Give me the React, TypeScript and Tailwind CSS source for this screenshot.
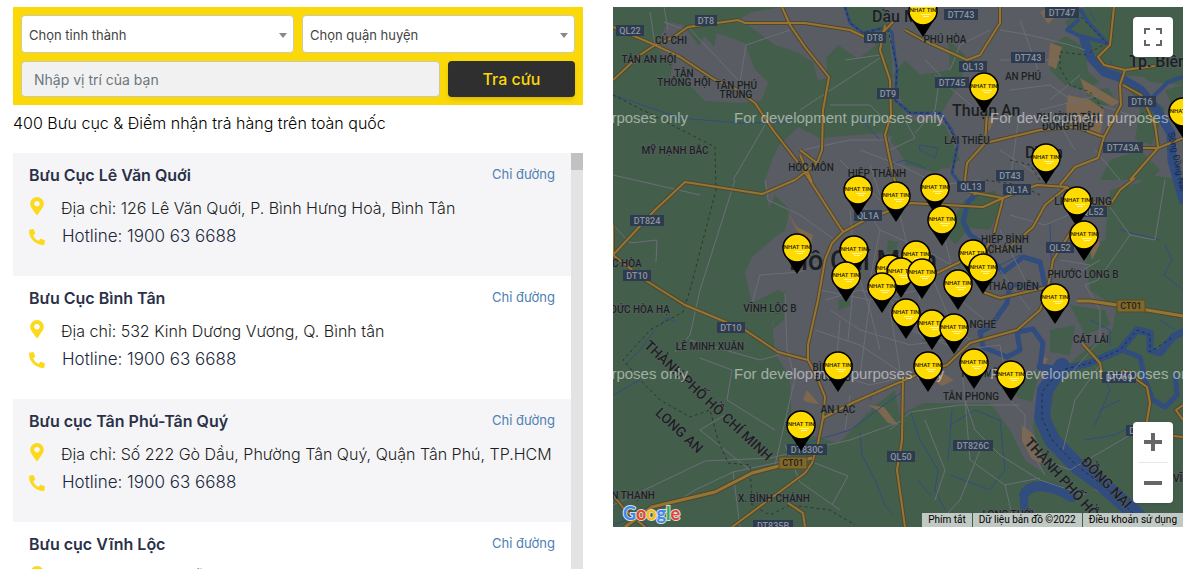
import { FaPhoneAlt, FaMapMarkerAlt } from 'react-icons/fa'

interface Office {
  name: string
  address: string
  hotline: string
}

interface MapLabel {
  text: string
  x: number
  y: number
}

const offices: Office[] = [
  { name: 'Bưu Cục Lê Văn Quới', address: '126 Lê Văn Quới, P. Bình Hưng Hoà, Bình Tân', hotline: '1900 63 6688' },
  { name: 'Bưu Cục Bình Tân', address: '532 Kinh Dương Vương, Q. Bình tân', hotline: '1900 63 6688' },
  { name: 'Bưu cục Tân Phú-Tân Quý', address: 'Số 222 Gò Dầu, Phường Tân Quý, Quận Tân Phú, TP.HCM', hotline: '1900 63 6688' },
  { name: 'Bưu cục Vĩnh Lộc', address: '280 Nguyễn Thị Tú, P. Bình Hưng Hoà B, Bình Tân', hotline: '1900 63 6688' },
]

// [x, y] of the centre of each pin's disc, back to front
const pins = [
  [923, 11], [984, 87], [1046, 158], [1183, 112], [935, 188], [858, 190], [896, 196],
  [1077, 201], [942, 220], [1084, 235], [797, 248], [854, 250], [973, 254], [916, 255],
  [983, 268], [890, 269], [901, 272], [922, 273], [846, 276], [958, 284], [882, 287],
  [1055, 298], [906, 313], [932, 324], [954, 328], [974, 363], [838, 366], [928, 366],
  [1011, 375], [801, 425],
]

const urban = [
  'M655 47L668 22L683 25L699 46L704 36L714 47L717 33L745 43L755 70L768 82L762 100L738 103L705 101L688 83L672 63Z',
  'M735 22L752 12L782 7H845L850 25L870 38L876 45L858 59L838 45L826 58L828 78L818 80L813 62L797 52L775 45L748 25Z',
  'M885 7H1085L1070 30L1090 50L1120 75L1183 80V180L1150 175L1115 200L1105 250L1118 300L1112 330L1085 350L1060 372L1040 395L1033 425L1042 472L1025 460L1010 430L990 403L923 403L890 420L868 412L852 430L838 443L792 430L790 378L775 353L772 323L785 293L778 290L752 303L745 273L752 257L772 240L768 200L765 180L772 160L778 147L798 127L820 138L883 133L900 140L905 165L935 172L960 160L945 125L910 120L893 95L892 60L888 30Z',
  'M673 63l5 2l-2 15l-6 -2Z',
]

const parks = [
  'M893 75L905 60L920 75L950 70L948 40L965 55L962 80L940 115L905 112Z',
  'M905 125L935 118L952 140L950 168L925 170L905 160L890 140Z',
  'M1052 45L1066 36L1085 48L1088 72L1100 82L1082 90L1065 85L1050 70Z',
  'M1065 22L1085 7H1114L1108 45L1095 47L1070 32Z',
  'M1114 7H1183V85L1150 82L1125 65L1105 62Z',
  'M1085 92L1108 88L1116 100L1098 110Z',
  'M1128 85L1165 108L1152 145L1135 140L1140 110Z',
  'M1165 90L1183 85V130Z',
  'M1110 160L1140 150L1160 170L1150 180L1100 180Z',
  'M965 200L995 190L1002 205L990 230L970 228L955 245L945 232Z',
  'M1110 190L1160 178L1183 210V320L1130 300L1118 310L1090 290L1085 250L1105 240Z',
  'M1070 305L1105 310L1110 325L1085 335Z',
  'M1050 330L1075 325L1070 355L1050 352Z',
  'M765 245L785 230L790 210L775 195L768 210Z',
  'M838 300l10 -3l3 8l-12 5Z',
  'M888 240l10 2l-2 12l-9 -2Z',
  'M778 300L786 290L784 320L772 330Z',
  'M870 410L895 390L902 430L880 440Z',
  'M925 335l10 4l-3 6l-10 -4Z',
  'M1010 380L1040 370L1032 402L1018 398Z',
]

const sand = [
  'M1040 12l12 -6l6 8l-10 10Z',
  'M1068 95L1090 100L1104 110L1100 138L1072 126L1066 110Z',
  'M1050 43l12 4l-6 22l-8 -4Z',
  'M1080 78L1100 90L1120 102L1112 106L1085 92Z',
  'M1022 425l12 10l12 30l-14 -6l-10 -18Z',
  'M1040 395l12 -18l8 2l-14 24Z',
  'M1072 465l22 8l20 26l-18 -8Z',
  'M803 400l4 -10l12 14l-12 -2Z',
  'M868 405l16 2l14 18l-10 -2l-10 -12Z',
  'M986 118l8 0l-4 12l-6 0Z',
  'M1088 240l8 -8l4 12l-8 16Z',
  'M1040 355l8 4l-6 10Z',
  'M787 211l10 16l16 8l-2 10l-14 -14Z',
  'M930 378l14 -4l10 6l-12 6Z',
]

const thinRoads =
  'M664 7L668 30M650 12L655 45M664 22L685 30M688 27L740 82L746 45L790 30M740 82L752 100M613 175L700 195M765 125L733 180M735 180L700 290L690 335L675 352M690 340L760 360L790 352M613 225L630 243L657 240L656 262M765 180L768 200L800 215L835 240M752 303L760 275L800 272L825 260M785 293L787 350M787 350L795 378M795 378L775 465M613 505L705 461L770 458L850 440L905 420M655 515L695 490L733 472L780 462M733 472L740 527M750 470L700 430L725 415M727 400L775 430M727 400L732 370L700 358M785 445L800 482L840 510M815 463L848 476L832 505M845 60L880 55M800 110L880 58M830 105L870 105L890 125M803 150L850 140L890 140M840 160L860 180L880 200M905 120L915 138L890 150M915 133L935 110L940 75L925 60M935 75L965 100L985 118M950 70L960 45L990 30M1000 30L1030 35L1070 45L1085 50M1020 20L1040 75M1000 60L1060 60M1010 90L1050 85L1085 110M1020 110L1010 180M1050 100L1080 75M1060 125L1075 150M1000 150L1030 170L1060 190M1100 105L1130 115M1095 150L1120 180M1105 200L1130 235L1098 280L1085 285M1085 285L1100 310L1100 340L1065 380M1130 235L1155 240L1165 180M1100 260L1075 275M860 200L880 230L925 250L960 270M880 230L870 280L890 300L925 340M850 250L870 310L880 350M820 290L870 300L920 290M830 310L860 330L910 345L945 340M815 330L860 345L905 375M825 300L860 290L900 300M850 210L855 270L848 340M900 215L920 300M870 300L860 375M890 310L900 370M840 320L835 380M925 260L950 320L970 340M945 240L960 300L985 320M910 330L960 350L1000 345M960 350L965 400M1000 345L1010 400L1025 415L1025 440L1045 475M965 400L975 430L1000 455L1040 480L1085 495M965 400L970 460L1005 485L1015 527M960 500L935 527M1005 485L1040 478M890 430L910 412L960 405L1020 405M925 420L945 470L935 500M960 500L980 450M1045 460L1070 470L1130 435M1063 450L1075 400L1100 365M820 370L870 385L905 377M850 395L845 430M1000 230L1030 290M1010 215L1045 225L1080 210M1060 260L1090 265M1000 270L1030 310M860 150L900 165L940 185L980 180M870 165L880 195M1040 110L1100 95'

const streams =
  'M613 95L680 118L740 123L790 122M880 140L860 118L870 123M920 145L938 148L935 158L920 150ZM890 165L905 160L925 168M1110 60L1115 72M1095 20L1090 12M968 260L1000 265L1020 255M1050 225L1052 285M1120 230L1160 240M1090 320L1110 330L1110 345M660 325L668 318L675 322M655 330L640 350L625 365M613 395L640 380M860 433L862 455L875 480L885 505L893 515M910 410L920 440L938 470L935 490L945 510M950 425L975 410L1000 420L1005 470L990 490L950 475M918 480L930 495M952 410L948 460M800 445L850 430L905 390M870 400L875 390M1120 372L1105 380L1110 390L1095 425M1100 410L1120 400M1085 440L1115 435L1135 425M1165 245L1172 260L1164 275L1183 290M1160 320L1175 330M613 525L640 515L648 527'

const highways =
  'M613 27L655 45L680 57L715 80L733 87L755 103L773 130L800 165L843 232M613 80L640 55L655 45L672 38L688 27L738 20L745 23L805 23L850 30L865 37L878 37L895 20M782 7L790 25L805 47L829 77L823 110L822 150L817 163M800 155L812 182M885 25L880 50L890 80L891 115L885 135L890 160L897 190M905 30L923 40L967 60L980 55L1000 23L1000 7M987 113L985 143L967 163L965 180L975 195M800 150L817 163M985 143L1040 130L1075 127L1104 137M1114 7L1110 45L1098 57L1104 65L1125 70L1155 66M1125 70L1120 85L1121 105L1104 137L1098 158L1075 167L1060 185M1123 85L1141 95L1155 125L1158 147M1104 148H1158L1183 138M1158 148L1130 180M613 255L655 210L685 182L762 194L795 180L817 163M613 225V255L645 280L685 305L745 330L778 352L808 360M808 360L808 345L818 300L825 260L832 243L843 232L865 220L910 203L983 207L1003 198L1037 185L1067 187L1080 200L1110 205L1120 190L1135 178M970 192L1003 198L993 237L985 250M1067 187L1045 205L1033 227L1010 247L970 257L937 273M1072 230L1053 260L1048 287L1000 298L983 292M1048 290L1040 310L1017 330L970 343L947 365L923 372L852 403L823 418M1082 343L1100 363L1103 380M823 418L825 397L817 377L808 360M823 418L818 443L812 463L805 473L778 493L732 527M788 503L803 513L805 527M903 377L902 440L897 470L905 527M1123 370L1147 387L1150 403L1145 433L1183 437M1183 405L1176 410L1183 420M613 495L625 510L645 527'

const expressways = 'M625 527L652 507L715 492L752 473L775 467L812 458M1077 301L1090 301L1117 305L1183 316'

const boundary =
  'M613 95L715 147L716 190L690 290L683 312L650 330L623 360L645 385L660 400L690 417L710 410L718 440L728 463L750 465L752 505L770 515L790 505L830 510L855 525M1081 17L1107 43L1085 55L1060 52L1060 68L1070 85L1090 92L1104 110M1130 120L1150 110M1040 180L1030 165L1010 160M1040 195L1020 185L985 180'

const badges = [
  { text: 'QL22', x: 630, y: 31 }, { text: 'DT8', x: 706, y: 21 }, { text: 'DT8', x: 875, y: 38 },
  { text: 'DT743', x: 961, y: 15 }, { text: 'DT747', x: 1062, y: 13 }, { text: 'DT745', x: 952, y: 83 },
  { text: 'DT743', x: 1028, y: 58 }, { text: 'QL13', x: 973, y: 67 }, { text: 'DT9', x: 888, y: 94 },
  { text: 'DT16', x: 1142, y: 102 }, { text: 'DT743A', x: 1123, y: 148 }, { text: 'DT43', x: 1010, y: 176 },
  { text: 'QL13', x: 971, y: 187 }, { text: 'QL1A', x: 1017, y: 190 }, { text: 'QL1A', x: 868, y: 216 },
  { text: 'QL52', x: 1093, y: 212 }, { text: 'QL52', x: 1060, y: 248 }, { text: 'DT824', x: 647, y: 221 },
  { text: 'DT10', x: 637, y: 276 }, { text: 'DT10', x: 731, y: 328 }, { text: 'DT830C', x: 807, y: 450 },
  { text: 'DT826C', x: 973, y: 446 }, { text: 'QL50', x: 901, y: 457 }, { text: 'DT769', x: 1119, y: 378 },
  { text: 'DT835B', x: 773, y: 526 }, { text: 'DT25', x: 1140, y: 431 },
]

const places: MapLabel[] = [
  { text: 'CỦ CHI', x: 671, y: 44 }, { text: 'TÂN AN HỘI', x: 649, y: 63 },
  { text: 'TÂN', x: 684, y: 77 }, { text: 'THÔNG HỘI', x: 684, y: 86 },
  { text: 'TÂN PHÚ', x: 736, y: 89 }, { text: 'TRUNG', x: 736, y: 98 },
  { text: 'MỸ HẠNH BẮC', x: 675, y: 154 }, { text: 'HÓC MÔN', x: 811, y: 171 },
  { text: 'PHÚ HÒA', x: 945, y: 43 }, { text: 'AN PHÚ', x: 1023, y: 80 },
  { text: 'LÁI THIÊU', x: 967, y: 144 }, { text: 'HIỆP THÀNH', x: 877, y: 177 },
  { text: 'PHƯỜNG TÂN', x: 1068, y: 121 }, { text: 'ĐÔNG HIỆP', x: 1068, y: 130 },
  { text: 'LINH TRUNG', x: 1083, y: 205 }, { text: 'HIỆP BÌNH', x: 1005, y: 243 },
  { text: 'CHÁNH', x: 1005, y: 253 }, { text: 'PHƯỚC LONG B', x: 1083, y: 278 },
  { text: 'THẢO ĐIỀN', x: 1013, y: 290 }, { text: 'BẾN NGHÉ', x: 972, y: 328 },
  { text: 'CÁT LÁI', x: 1091, y: 343 }, { text: 'ĐỨC HÒA', x: 620, y: 267 },
  { text: 'ĐỨC HÒA HẠ', x: 640, y: 313 }, { text: 'VĨNH LỘC B', x: 770, y: 312 },
  { text: 'LÊ MINH XUÂN', x: 710, y: 350 }, { text: 'BÌNH TRỊ', x: 833, y: 371 },
  { text: 'ĐÔNG B', x: 833, y: 381 }, { text: 'AN LẠC', x: 838, y: 413 },
  { text: 'TÂN PHONG', x: 971, y: 400 }, { text: 'TÂN THẠNH', x: 627, y: 499 },
  { text: 'X. BÌNH CHÁNH', x: 774, y: 502 }, { text: 'PHÚ MỸ', x: 980, y: 377 },
  { text: 'LONG THỚI', x: 1008, y: 518 }, { text: 'VĨNH THANH', x: 1203, y: 482 },
]

function RoadBadge({ text, x, y }: MapLabel) {
  const width = text.length * 6 + 4
  return (
    <g>
      <rect x={x - width / 2} y={y - 6} width={width} height="11" fill="#2d3b50" />
      <text x={x} y={y + 3} fontSize="9" fontWeight="500" textAnchor="middle" fill="#8c939e">
        {text}
      </text>
    </g>
  )
}

function TollBadge({ x, y }: { x: number; y: number }) {
  return (
    <g>
      <rect x={x - 14} y={y - 6} width="28" height="12" fill="#80672a" stroke="#5b4a22" />
      <text x={x} y={y + 3} fontSize="9" fontWeight="500" textAnchor="middle" fill="#26231c">
        CT01
      </text>
    </g>
  )
}

function Pin({ x, y }: { x: number; y: number }) {
  return (
    <g transform={`translate(${x} ${y})`}>
      <path d="M-13 6L0 26L13 6Z" fill="#000" />
      <circle r="14" fill="#ffdb00" stroke="#000" strokeWidth="1.5" />
      <text y="1" fontSize="6" fontWeight="500" textAnchor="middle" fill="#1c1a05">
        NHAT TIN
      </text>
      <path d="M-2 3.5H8M0 5.5H6" stroke="#fff3a0" strokeWidth="1" />
    </g>
  )
}

function OfficeMap() {
  return (
    <svg
      viewBox="613 7 570 520"
      preserveAspectRatio="xMidYMid slice"
      className="block h-full w-full font-['Roboto',sans-serif]"
      role="img"
      aria-label="Bản đồ bưu cục"
    >
      <rect x="613" y="7" width="570" height="520" fill="#435f4b" />
      <g fill="#5a5c64">
        {urban.map((d) => (
          <path key={d} d={d} />
        ))}
      </g>
      <g fill="#435f4b">
        {parks.map((d) => (
          <path key={d} d={d} />
        ))}
      </g>
      <g fill="#7d674f">
        {sand.map((d) => (
          <path key={d} d={d} />
        ))}
      </g>

      {/* Water */}
      <g fill="none" stroke="#314c7e" strokeLinejoin="round" strokeLinecap="round">
        <path d={streams} strokeWidth="1" />
        <path d="M845 7L850 23L863 33L887 27L892 33L895 57L897 70L895 100L910 113L940 113L950 127L958 143L952 173L965 190" strokeWidth="3" />
        <path d="M980 190L968 202L963 222L970 235L985 245L990 258L1003 272L1023 257L1040 262L1046 290L1030 285L1010 285L1007 303L990 327L980 332L983 347L1007 357L1020 350L1017 332L1033 329L1043 343L1040 367" strokeWidth="5" />
        <path d="M1040 367L1060 370L1090 363L1120 350L1137 330L1150 333L1150 350L1160 353L1173 337L1183 332" strokeWidth="7" />
        <path d="M1122 350L1140 357L1145 380L1153 400L1165 407L1177 395L1175 375" strokeWidth="5" />
        <path d="M1062 366L1045 390L1042 418L1052 440L1077 466L1103 485L1120 500L1150 527" strokeWidth="16" />
        <path d="M1024 495C1030 482 1050 484 1072 497" strokeWidth="10" />
        <path d="M1024 495L1024 508L1034 518L1040 527" strokeWidth="8" />
        <path d="M1081 10L1088 22L1107 43L1080 36L1067 30L1078 20" strokeWidth="4" />
        <path d="M1084 40L1091 58L1104 72L1121 78L1141 90L1157 110L1171 133L1172 160L1183 200" strokeWidth="9" />
        <path d="M1154 96L1168 82L1183 77" strokeWidth="4" />
      </g>
      <path d="M1060 370L1042 392L1042 418L1052 440L1077 466L1103 485L1135 515M1065 369L1090 363L1120 350L1137 330L1150 335V352L1173 337M845 7L850 23L863 33L887 27L895 57L897 70L895 100L910 113L940 113L958 143L952 173" fill="none" stroke="#1e2c4e" strokeDasharray="3 3" />

      {/* Roads */}
      <g fill="none" strokeLinejoin="round">
        <path d={thinRoads} stroke="#6c6e77" strokeWidth="1" />
        <path d={boundary} stroke="#2b3630" strokeDasharray="3 3" />
        <path d={highways} stroke="#50472f" strokeWidth="4" />
        <path d={highways} stroke="#967532" strokeWidth="2" />
        <path d={expressways} stroke="#50472f" strokeWidth="5" />
        <path d={expressways} stroke="#967532" strokeWidth="3" />
      </g>

      {badges.map((badge) => (
        <RoadBadge key={`${badge.text}-${badge.x}`} {...badge} />
      ))}
      <TollBadge x={793} y={463} />
      <TollBadge x={1131} y={306} />

      {/* Place names */}
      <g textAnchor="middle" fill="#1d2023" stroke="#5b6164" strokeWidth="1" style={{ paintOrder: 'stroke' }}>
        <g fontSize="10" fontWeight="500">
          {places.map((place) => (
            <text key={`${place.text}-${place.y}`} x={place.x} y={place.y}>
              {place.text}
            </text>
          ))}
        </g>
        <g fontSize="16" fontWeight="500" textAnchor="start">
          <text x="872" y="22">Dầu Một</text>
          <text x="952" y="116">Thuận An</text>
          <text x="1025" y="158">Dĩ An</text>
          <text x="1129" y="67">Tp. Biên Hòa</text>
        </g>
        <text x="863" y="270" fontSize="27" fontWeight="500">Hồ Chí Minh</text>
        <g fontSize="14" fontWeight="500">
          <text transform="translate(705 404) rotate(43)">THÀNH PHỐ HỒ CHÍ MINH</text>
          <text transform="translate(676 434) rotate(43)">LONG AN</text>
          <text transform="translate(1024 443) rotate(48)" textAnchor="start">THÀNH PHỐ HỒ CHÍ</text>
          <text transform="translate(1103 486) rotate(46)">ĐỒNG NAI</text>
        </g>
      </g>
      <text transform="translate(1168 133) rotate(78)" fontSize="9" fill="#16284f">Sông Đồng Nai</text>

      <g fontSize="15" fill="#fff" fillOpacity="0.5" className="font-['Liberation_Sans',sans-serif]">
        {[118, 374].map((y) =>
          [478, 734, 990].map((x) => (
            <text key={`${x}-${y}`} x={x} y={y + 5}>
              For development purposes only
            </text>
          )),
        )}
      </g>

      {pins.map(([x, y]) => (
        <Pin key={`${x}-${y}`} x={x} y={y} />
      ))}
    </svg>
  )
}

function SelectBox({ id, label }: { id: string; label: string }) {
  return (
    <div className="relative flex-1">
      <select
        id={id}
        aria-label={label}
        className="block h-[38px] w-full appearance-none rounded border border-[#cfc9a8] bg-white px-[7px] pt-1 text-[13px] text-[#444]"
      >
        <option>{label}</option>
      </select>
      <svg viewBox="0 0 8 5" className="pointer-events-none absolute right-[7px] top-[18px] h-[5px] w-2" aria-hidden="true">
        <path d="M0 0H8L4 5Z" fill="#888" />
      </svg>
    </div>
  )
}

function SearchForm() {
  return (
    <form className="flex flex-col gap-2 bg-[#fbd909] p-2" onSubmit={(e) => e.preventDefault()}>
      <div className="flex gap-2">
        <SelectBox id="province" label="Chọn tỉnh thành" />
        <SelectBox id="district" label="Chọn quận huyện" />
      </div>
      <div className="flex gap-2">
        <input
          type="text"
          aria-label="Nhập vị trí của bạn"
          placeholder="Nhập vị trí của bạn"
          className="h-9 min-w-0 flex-1 rounded border border-[#cfc9a8] bg-[#f1f1f1] px-3 text-sm text-[#495057] placeholder:text-[#6c757d]"
        />
        <button
          type="submit"
          className="h-9 w-[127px] rounded bg-[#2f2f2f] text-base font-medium text-[#fbd909] shadow-md"
        >
          Tra cứu
        </button>
      </div>
    </form>
  )
}

function OfficeItem({ office }: { office: Office }) {
  return (
    <li className="px-4 pb-6 pt-[11px] odd:bg-[#f5f5f7]">
      <div className="mb-2 flex items-center justify-between">
        <h2 className="text-base font-semibold leading-[22px] text-[#2b3148]">{office.name}</h2>
        <a href="#map" className="text-[13px] text-[#4d80b3]">
          Chỉ đường
        </a>
      </div>
      <p className="flex h-7 items-center whitespace-nowrap text-base font-light text-[#1c1e24]">
        <FaMapMarkerAlt className="mb-1 h-[18px] w-4 shrink-0 text-[#fbd91c]" />
        <span className="ml-4">Địa chỉ: {office.address}</span>
      </p>
      <p className="flex h-[30px] items-center text-[17px] font-light text-[#20263c]">
        <FaPhoneAlt className="h-4 w-4 shrink-0 text-[#fbd91c]" />
        <span className="ml-[17px]">Hotline: {office.hotline}</span>
      </p>
    </li>
  )
}

function MapControls() {
  return (
    <>
      <button
        type="button"
        aria-label="Toàn màn hình"
        className="absolute right-2.5 top-2.5 flex h-10 w-10 items-center justify-center rounded-sm bg-white shadow"
      >
        <svg viewBox="0 0 18 18" className="h-[18px] w-[18px]" fill="#666">
          <path d="M0 0v6h2V2h4V0H0zm16 0h-4v2h4v4h2V0h-2zm0 16h-4v2h6v-6h-2v4zM2 12H0v6h6v-2H2v-4z" />
        </svg>
      </button>
      <div className="absolute bottom-6 right-2.5 flex w-10 flex-col items-center rounded-sm bg-white shadow">
        <button type="button" aria-label="Phóng to" className="flex h-10 w-10 items-center justify-center">
          <svg viewBox="0 0 18 18" className="h-[18px] w-[18px]" fill="#666">
            <path d="M18 7h-7V0H7v7H0v4h7v7h4v-7h7z" />
          </svg>
        </button>
        <div className="h-px w-[30px] bg-[#e6e6e6]" />
        <button type="button" aria-label="Thu nhỏ" className="flex h-10 w-10 items-center justify-center">
          <svg viewBox="0 0 18 18" className="h-[18px] w-[18px]" fill="#666">
            <path d="M0 7h18v4H0z" />
          </svg>
        </button>
      </div>
      <a href="#google" aria-label="Google" className="absolute bottom-0 left-2">
        <svg viewBox="0 0 62 27" className="h-[27px] w-[62px]">
          <text
            x="2"
            y="20"
            fontSize="18"
            fontWeight="700"
            stroke="#d5ddd7"
            strokeWidth="2"
            style={{ paintOrder: 'stroke' }}
            className="font-['Lato',sans-serif]"
          >
            <tspan fill="#4285f4">G</tspan>
            <tspan fill="#ea4335">o</tspan>
            <tspan fill="#fbbc05">o</tspan>
            <tspan fill="#4285f4">g</tspan>
            <tspan fill="#34a853">l</tspan>
            <tspan fill="#ea4335">e</tspan>
          </text>
        </svg>
      </a>
      <div className="absolute bottom-0 right-0 flex h-3.5 gap-px font-['Roboto',sans-serif] text-[10px] leading-[14px] text-black">
        <button type="button" className="bg-[#c0c9c3] px-1.5">Phím tắt</button>
        <span className="bg-[#c0c9c3] px-1.5">Dữ liệu bản đồ ©2022</span>
        <a href="#terms" className="bg-[#c0c9c3] px-1.5">Điều khoản sử dụng</a>
      </div>
    </>
  )
}

export default function App() {
  return (
    <main className="grid grid-cols-2 gap-[30px] bg-white pb-4 pl-[13px] pr-[11px] pt-[7px] font-['Inter',sans-serif]">
      <section className="min-w-0">
        <SearchForm />
        <p className="mb-[18px] mt-1.5 text-base font-light text-black">
          400 Bưu cục &amp; Điểm nhận trả hàng trên toàn quốc
        </p>
        <div className="flex h-[416px] overflow-hidden">
          <ul className="min-w-0 flex-1">
            {offices.map((office) => (
              <OfficeItem key={office.name} office={office} />
            ))}
          </ul>
          <div className="w-3 bg-[#e3e3e3]">
            <div className="h-[17px] bg-[#c1c1c1]" />
          </div>
        </div>
      </section>

      <section id="map" className="relative h-[520px] min-w-0 overflow-hidden">
        <OfficeMap />
        <MapControls />
      </section>
    </main>
  )
}
